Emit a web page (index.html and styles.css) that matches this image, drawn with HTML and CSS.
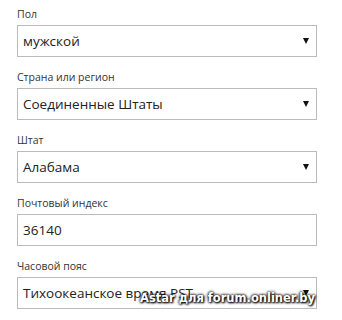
FILE: index.html
```html
<!DOCTYPE html>
<html lang="ru">
<head>
    <meta charset="UTF-8">
    <title>Профиль</title>
    <link rel="stylesheet" href="styles.css">
</head>
<body>
    <div class="form">
        <div class="field">
            <div class="label">Пол</div>
            <div class="box select">
                <span>мужской</span>
                <span class="arrow"></span>
            </div>
        </div>
        <div class="field">
            <div class="label">Страна или регион</div>
            <div class="box select">
                <span>Соединенные Штаты</span>
                <span class="arrow"></span>
            </div>
        </div>
        <div class="field">
            <div class="label">Штат</div>
            <div class="box select">
                <span>Алабама</span>
                <span class="arrow"></span>
            </div>
        </div>
        <div class="field">
            <div class="label">Почтовый индекс</div>
            <div class="box">
                <span>36140</span>
            </div>
        </div>
        <div class="field">
            <div class="label">Часовой пояс</div>
            <div class="box select">
                <span>Тихоокеанское время PST</span>
                <span class="arrow"></span>
            </div>
        </div>
    </div>
    <div class="watermark">Astar для forum.onliner.by</div>
</body>
</html>
```

FILE: styles.css
```css
body {
    margin: 0;
    padding: 6px 0 0 17px;
    background: #fff;
    font-family: "Open Sans", "Noto Sans", sans-serif;
    color: #222;
    position: relative;
    height: 314px;
    overflow: hidden;
}
.form {
    width: 300px;
}
.field {
    margin-bottom: 12px;
}
.label {
    font-size: 10.5px;
    line-height: 16px;
    color: #333;
    margin-bottom: 3px;
}
.box {
    box-sizing: border-box;
    height: 32px;
    border: 1px solid #bbb;
    display: flex;
    align-items: center;
    justify-content: space-between;
    padding: 0 7px 0 5px;
    font-size: 13.5px;
    color: #222;
}
.arrow {
    width: 0;
    height: 0;
    border-left: 3px solid transparent;
    border-right: 3px solid transparent;
    border-top: 6px solid #111;
}
.watermark {
    position: absolute;
    left: 140px;
    top: 291px;
    font-family: "DejaVu Sans", sans-serif;
    font-weight: bold;
    font-size: 11.5px;
    color: #fff;
    text-shadow: 0 0 3px #000, 0 0 3px #000, 1px 1px 2px #000;
    white-space: nowrap;
}
```
